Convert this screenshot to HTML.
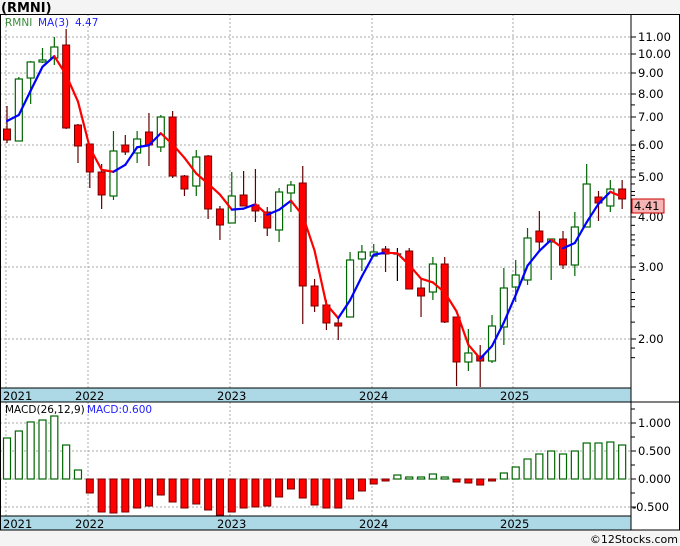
<!DOCTYPE html>
<html><head><meta charset="utf-8"><style>
html,body{margin:0;padding:0;background:#f4f4f4;}
body{width:680px;height:546px;overflow:hidden;font-family:"DejaVu Sans",sans-serif;}
svg{display:block}
</style></head><body>
<svg id="s" width="680" height="546" xmlns="http://www.w3.org/2000/svg" font-family="DejaVu Sans, sans-serif"></svg>
<script>
const C=[
['r',129,140,106,143],['g',79,141,77,141],['g',62,78,61,104],['g',60,62,48,63],['g',47,58,37,65],
['r',45,128,29,129],['r',125,146,124,163],['r',144,172,144,188],['r',172,195,164,209],['g',151,196,131,200],
['r',145,152,135,155],['g',139,153,131,163],['r',132,145,113,166],['g',117,147,115,152],['r',117,176,111,178],
['r',176,189,175,196],['g',157,186,150,196],['r',156,209,155,219],['r',209,225,206,240],['g',196,223,172,223],
['r',195,206,171,206],['r',205,211,169,222],['r',212,228,207,236],['g',192,230,188,242],['g',185,193,181,212],
['r',183,286,166,324],['r',286,306,279,312],['r',305,323,300,330],['r',323,326,317,340],['g',260,317,252,317],
['g',252,259,245,271],['g',252,256,244,256],['r',249,254,246,272],['k',254,254,248,281],['r',251,289,248,289],
['r',288,296,278,317],['g',264,292,257,300],['r',264,322,257,323],['r',317,362,317,386],['g',353,362,329,371],
['r',356,361,345,387],['g',326,361,315,363],['g',288,327,268,345],['g',275,287,260,302],['g',238,280,228,285],
['r',231,242,211,250],['g',239,242,239,280],['r',239,265,231,269],['g',227,265,212,276],['g',184,227,164,227],
['r',197,203,191,221],['g',189,206,180,212],['r',189,199,180,209]];
const M=[438,431,422,420,416,445,470,493,512,513,512,508,506,495,502,508,504,510,515,512,508,507,506,497,489,498,505,508,508,499,491,484,481,475,477,477,474,477,482,483,485,481,473,467,459,454,451,454,451,443,443,442,445];
const Y0=339,K=177.1;
const y2p=y=>2*Math.exp((Y0-y)/K), p2y=p=>Y0-K*Math.log(p/2);
const X=i=>7+i*11.83;
let h='';
h+='<rect x="0" y="0" width="680" height="546" fill="#f4f4f4"/>';
h+='<text x="1" y="12" font-size="13" font-weight="bold" fill="#000">(RMNI)</text>';
h+='<rect x="0" y="14" width="680" height="516" fill="#fff"/>';
[[11,37],[10,54],[9,73],[8,94],[7,117],[6,145],[5,177],[4,217],[3,267],[2,339]].forEach(([v,y])=>{
 h+=`<line x1="0" x2="631" y1="${y}" y2="${y}" stroke="#aaa" stroke-dasharray="2,2"/>`;
 h+=`<line x1="631" x2="636" y1="${y}" y2="${y}" stroke="#000"/>`;
 h+=`<text x="638" y="${y+4}" font-size="11.5" fill="#000">${v.toFixed(2)}</text>`;});
[2.5,3.5,4.5,5.5,6.5,7.5,1.8,1.9,2.2,2.4,2.6,2.8,3.2,3.4,3.6,3.8,4.2,4.4,4.6,4.8,5.2,5.4,5.6,5.8].forEach(v=>{const y=p2y(v);if(y>15&&y<388)h+=`<line x1="631" x2="635" y1="${y}" y2="${y}" stroke="#000"/>`;});
[6,88,230,372,513].forEach(x=>{h+=`<line x1="${x}" x2="${x}" y1="14" y2="388" stroke="#aaa" stroke-dasharray="2,2"/><line x1="${x}" x2="${x}" y1="402" y2="516" stroke="#aaa" stroke-dasharray="2,2"/>`;});
[[1,423,'1.000'],[0.5,451,'0.500'],[0,479,'0.000'],[-0.5,507,'-0.500']].forEach(([v,y,t])=>{
 h+=`<line x1="0" x2="631" y1="${y}" y2="${y}" stroke="#aaa" stroke-dasharray="2,2"/><line x1="631" x2="636" y1="${y}" y2="${y}" stroke="#000"/>`;
 h+=`<text x="${v<0?632:638}" y="${y+4}" font-size="11.5" fill="#000">${t}</text>`;});
[409,437,465,493].forEach(y=>h+=`<line x1="631" x2="635" y1="${y}" y2="${y}" stroke="#000"/>`);
C.forEach((c,i)=>{const x=X(i);const col=c[0]=='g'?'#006600':(c[0]=='r'?'#660000':'#000');
 h+=`<line x1="${x}" x2="${x}" y1="${c[3]}" y2="${c[4]}" stroke="${col}" stroke-width="1.2"/>`;
 const hh=Math.max(c[2]-c[1],1.5);
 if(c[0]=='g')h+=`<rect x="${x-3.5}" y="${c[1]}" width="7" height="${hh}" fill="#fff" stroke="#006600" stroke-width="1.2"/>`;
 else if(c[0]=='r')h+=`<rect x="${x-3.5}" y="${c[1]}" width="7" height="${hh}" fill="#f00" stroke="#700" stroke-width="1"/>`;
 else h+=`<line x1="${x-4}" x2="${x+4}" y1="${c[1]}" y2="${c[1]}" stroke="#000" stroke-width="1.2"/>`;});
const cl=C.map(c=>y2p(c[0]=='g'?c[1]:c[2]));
const ma=[121,115];for(let i=2;i<C.length;i++)ma.push(p2y((cl[i]+cl[i-1]+cl[i-2])/3));
for(let i=1;i<ma.length;i++){const col=ma[i]<ma[i-1]?'#0000ff':'#ff0000';
 h+=`<line x1="${X(i-1)}" y1="${ma[i-1]}" x2="${X(i)}" y2="${ma[i]}" stroke="${col}" stroke-width="2.2" stroke-linecap="round"/>`;}
h+='<text x="5" y="26" font-size="10.5" fill="#3a8a3a">RMNI</text><text x="38" y="26" font-size="10.5" fill="#2222ff">MA(3)</text><text x="75" y="26" font-size="10.5" fill="#2222ff">4.47</text>';
h+='<rect x="632" y="199" width="32" height="14" fill="#f6b4b4" stroke="#c00" stroke-width="1"/><text x="634" y="210" font-size="11.5" fill="#000">4.41</text>';
M.forEach((m,i)=>{const x=X(i)-3.5;
 if(m<479)h+=`<rect x="${x}" y="${m}" width="7" height="${479-m}" fill="#fff" stroke="#006600" stroke-width="1.2"/>`;
 else h+=`<rect x="${x}" y="479" width="7" height="${Math.max(m-479,1.5)}" fill="#f00" stroke="#700" stroke-width="1"/>`;});
h+='<text x="5" y="413" font-size="10.5" fill="#000">MACD(26,12,9)</text><text x="87" y="413" font-size="10.5" fill="#2222ff">MACD:0.600</text>';
[[388,402],[516,530]].forEach(([a,b])=>{h+=`<rect x="0" y="${a}" width="631" height="${b-a}" fill="#add8e6"/><line x1="0" x2="631" y1="${a}" y2="${a}" stroke="#000"/><line x1="0" x2="680" y1="${b}" y2="${b}" stroke="#000"/>`;
 [['2021',3],['2022',75],['2023',217],['2024',359],['2025',500]].forEach(([t,x])=>h+=`<text x="${x}" y="${b-2}" font-size="11.5" fill="#000">${t}</text>`);});
h+='<line x1="0" x2="680" y1="14.5" y2="14.5" stroke="#000"/><line x1="631" x2="631" y1="14" y2="530" stroke="#000"/><line x1="679.5" x2="679.5" y1="14" y2="530" stroke="#000"/><line x1="0.5" x2="0.5" y1="14" y2="530" stroke="#000"/>';
h+='<rect x="0" y="531" width="680" height="15" fill="#f4f4f4"/><text x="678" y="543" font-size="11" fill="#000" text-anchor="end">©12Stocks.com</text>';
document.getElementById('s').innerHTML=h;
</script>
</body></html>
